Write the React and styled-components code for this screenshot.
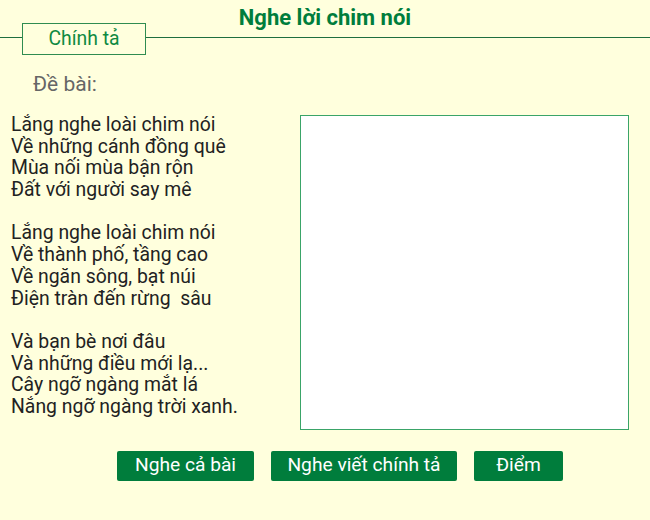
import React from "react";
import styled, { createGlobalStyle } from "styled-components";

const GlobalStyle = createGlobalStyle`
  html, body {
    margin: 0;
    padding: 0;
    background: #ffffdd;
  }
  body {
    font-family: Roboto, "Noto Sans", "Liberation Sans", sans-serif;
    min-height: 520px;
  }
`;

const Page = styled.div`
  width: 650px;
  min-height: 520px;
  background: #ffffdd;
`;

const Title = styled.h1`
  margin: 0;
  padding-top: 5.5px;
  height: 17.5px;
  font-size: 22px;
  line-height: 24px;
  font-weight: 700;
  color: #007d3c;
  text-align: center;
`;

const TabBar = styled.div`
  display: flex;
  align-items: flex-start;
`;

const Rule = styled.div`
  height: 1px;
  margin-top: 14px;
  background: #1f6e3f;
  width: ${({ $width }) => ($width ? `${$width}px` : "auto")};
  flex: ${({ $width }) => ($width ? "none" : "1")};
`;

const Tab = styled.div`
  width: 122px;
  height: 29px;
  border: 1px solid #2f8c50;
  display: flex;
  align-items: center;
  justify-content: center;
  font-size: 19.4px;
  color: #0f8a42;
  background: #ffffdd;
  padding-bottom: 1px;
  box-sizing: content-box;
`;

const Prompt = styled.div`
  margin: 16.5px 0 0 33px;
  font-size: 21px;
  color: #666666;
`;

const Body = styled.div`
  display: grid;
  grid-template-columns: 289px 329px;
  align-items: start;
  margin-top: 18.4px;
  padding-left: 11px;
`;

const Poem = styled.div`
  font-size: 19.4px;
  line-height: 21.7px;
  color: #222222;
  white-space: pre;
`;

const Answer = styled.textarea`
  box-sizing: border-box;
  margin: 1.5px 0 0 0;
  width: 329px;
  height: 315px;
  border: 1px solid #3aa468;
  background: #ffffff;
  resize: none;
  outline: none;
  font-family: inherit;
  font-size: 16px;
`;

const Actions = styled.div`
  display: flex;
  gap: 17px;
  padding-left: 117px;
  margin-top: 21px;
`;

const Button = styled.button`
  width: ${({ $width }) => $width}px;
  height: 30px;
  border: none;
  border-radius: 2px;
  background: #007d3c;
  color: #ffffff;
  font-family: inherit;
  font-size: 19.2px;
  padding: 0 0 3px;
  cursor: pointer;
`;

const poem = `Lắng nghe loài chim nói
Về những cánh đồng quê
Mùa nối mùa bận rộn
Đất với người say mê

Lắng nghe loài chim nói
Về thành phố, tầng cao
Về ngăn sông, bạt núi
Điện tràn đến rừng  sâu

Và bạn bè nơi đâu
Và những điều mới lạ...
Cây ngỡ ngàng mắt lá
Nắng ngỡ ngàng trời xanh.`;

export default function App() {
  return (
    <Page>
      <GlobalStyle />
      <Title>Nghe lời chim nói</Title>
      <TabBar>
        <Rule $width={22} />
        <Tab>Chính tả</Tab>
        <Rule />
      </TabBar>
      <Prompt>Đề bài:</Prompt>
      <Body>
        <Poem>{poem}</Poem>
        <Answer />
      </Body>
      <Actions>
        <Button $width={137}>Nghe cả bài</Button>
        <Button $width={186}>Nghe viết chính tả</Button>
        <Button $width={89}>Điểm</Button>
      </Actions>
    </Page>
  );
}
